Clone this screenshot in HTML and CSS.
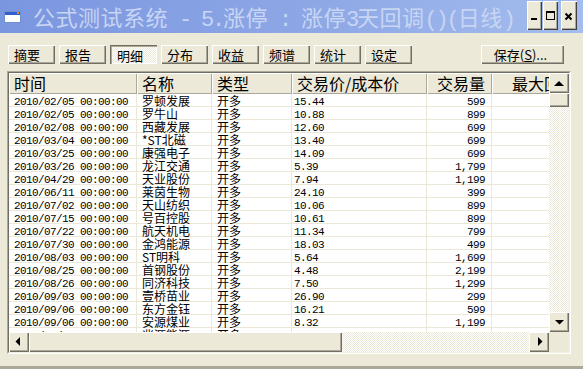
FILE: index.html
```html
<!DOCTYPE html>
<html lang="zh-CN">
<head>
<meta charset="utf-8">
<title>公式测试系统</title>
<link rel="stylesheet" href="styles.css">
</head>
<body>
<div class="window">
  <div class="titlebar">
    <svg class="appicon" viewBox="0 0 17 12" width="17" height="12">
      <rect x="0.5" y="0.5" width="16" height="11" fill="#ffffff" stroke="#6f8fcf"/>
      <rect x="1" y="1" width="15" height="3" fill="#2f5fd0"/>
      <rect x="13" y="1" width="2" height="2" fill="#f08040"/>
    </svg>
    <div class="title">公式测试系统<span class="hw"> - 5.</span>涨停<span class="hw"> : </span>涨停<span class="hw">3</span>天回调<span class="hw">()(</span>日线<span class="hw">)</span></div>
    <div class="caps">
      <span class="cap"><svg viewBox="0 0 15 29" width="15" height="29"><rect x="4" y="17" width="6" height="2" fill="#000"/></svg></span>
      <span class="cap"><svg viewBox="0 0 15 29" width="15" height="29"><rect x="3.5" y="10.5" width="8" height="8" fill="none" stroke="#000"/><rect x="3" y="10" width="9" height="2" fill="#000"/></svg></span>
      <span class="cap close"><svg viewBox="0 0 16 29" width="16" height="29"><path d="M4.5 12.5 L10.5 18.5 M10.5 12.5 L4.5 18.5" stroke="#000" stroke-width="2" fill="none"/></svg></span>
    </div>
  </div>

  <div class="toolbar">
    <button class="btn">摘要</button>
    <button class="btn">报告</button>
    <button class="btn on">明细</button>
    <button class="btn">分布</button>
    <button class="btn">收益</button>
    <button class="btn">频谱</button>
    <button class="btn">统计</button>
    <button class="btn">设定</button>
    <button class="btn save">保存(<u>S</u>)...</button>
  </div>

  <div class="listbox">
    <div class="listinner">
      <div class="view">
        <div class="hdr">
          <div class="h c1">时间</div>
          <div class="h c2">名称</div>
          <div class="h c3">类型</div>
          <div class="h c4">交易价/成本价</div>
          <div class="h c5 r">交易量</div>
          <div class="h c6 r">最大回撤</div>
        </div>
        <div class="row"><div class="c c1">2010/02/05 00:00:00</div><div class="c c2 z">罗顿发展</div><div class="c c3 z">开多</div><div class="c c4">15.44</div><div class="c c5 r">599</div><div class="c c6"></div></div>
        <div class="row"><div class="c c1">2010/02/05 00:00:00</div><div class="c c2 z">罗牛山</div><div class="c c3 z">开多</div><div class="c c4">10.88</div><div class="c c5 r">899</div><div class="c c6"></div></div>
        <div class="row"><div class="c c1">2010/02/08 00:00:00</div><div class="c c2 z">西藏发展</div><div class="c c3 z">开多</div><div class="c c4">12.60</div><div class="c c5 r">699</div><div class="c c6"></div></div>
        <div class="row"><div class="c c1">2010/03/04 00:00:00</div><div class="c c2 z">*ST北磁</div><div class="c c3 z">开多</div><div class="c c4">13.40</div><div class="c c5 r">699</div><div class="c c6"></div></div>
        <div class="row"><div class="c c1">2010/03/25 00:00:00</div><div class="c c2 z">康强电子</div><div class="c c3 z">开多</div><div class="c c4">14.09</div><div class="c c5 r">699</div><div class="c c6"></div></div>
        <div class="row"><div class="c c1">2010/03/26 00:00:00</div><div class="c c2 z">龙江交通</div><div class="c c3 z">开多</div><div class="c c4">5.39</div><div class="c c5 r">1,799</div><div class="c c6"></div></div>
        <div class="row"><div class="c c1">2010/04/29 00:00:00</div><div class="c c2 z">天业股份</div><div class="c c3 z">开多</div><div class="c c4">7.94</div><div class="c c5 r">1,199</div><div class="c c6"></div></div>
        <div class="row"><div class="c c1">2010/06/11 00:00:00</div><div class="c c2 z">莱茵生物</div><div class="c c3 z">开多</div><div class="c c4">24.10</div><div class="c c5 r">399</div><div class="c c6"></div></div>
        <div class="row"><div class="c c1">2010/07/02 00:00:00</div><div class="c c2 z">天山纺织</div><div class="c c3 z">开多</div><div class="c c4">10.06</div><div class="c c5 r">899</div><div class="c c6"></div></div>
        <div class="row"><div class="c c1">2010/07/15 00:00:00</div><div class="c c2 z">号百控股</div><div class="c c3 z">开多</div><div class="c c4">10.61</div><div class="c c5 r">899</div><div class="c c6"></div></div>
        <div class="row"><div class="c c1">2010/07/22 00:00:00</div><div class="c c2 z">航天机电</div><div class="c c3 z">开多</div><div class="c c4">11.34</div><div class="c c5 r">799</div><div class="c c6"></div></div>
        <div class="row"><div class="c c1">2010/07/30 00:00:00</div><div class="c c2 z">金鸿能源</div><div class="c c3 z">开多</div><div class="c c4">18.03</div><div class="c c5 r">499</div><div class="c c6"></div></div>
        <div class="row"><div class="c c1">2010/08/03 00:00:00</div><div class="c c2 z">ST明科</div><div class="c c3 z">开多</div><div class="c c4">5.64</div><div class="c c5 r">1,699</div><div class="c c6"></div></div>
        <div class="row"><div class="c c1">2010/08/25 00:00:00</div><div class="c c2 z">首钢股份</div><div class="c c3 z">开多</div><div class="c c4">4.48</div><div class="c c5 r">2,199</div><div class="c c6"></div></div>
        <div class="row"><div class="c c1">2010/08/26 00:00:00</div><div class="c c2 z">同济科技</div><div class="c c3 z">开多</div><div class="c c4">7.50</div><div class="c c5 r">1,299</div><div class="c c6"></div></div>
        <div class="row"><div class="c c1">2010/09/03 00:00:00</div><div class="c c2 z">壹桥苗业</div><div class="c c3 z">开多</div><div class="c c4">26.90</div><div class="c c5 r">299</div><div class="c c6"></div></div>
        <div class="row"><div class="c c1">2010/09/06 00:00:00</div><div class="c c2 z">东方金钰</div><div class="c c3 z">开多</div><div class="c c4">16.21</div><div class="c c5 r">599</div><div class="c c6"></div></div>
        <div class="row"><div class="c c1">2010/09/06 00:00:00</div><div class="c c2 z">安源煤业</div><div class="c c3 z">开多</div><div class="c c4">8.32</div><div class="c c5 r">1,199</div><div class="c c6"></div></div>
        <div class="row"><div class="c c1">2010/09/07 00:00:00</div><div class="c c2 z">兆源能源</div><div class="c c3 z">开多</div><div class="c c4">9.12</div><div class="c c5 r">1,099</div><div class="c c6"></div></div>
      </div>
      <div class="vbar">
        <div class="sbtn"><svg viewBox="0 0 20 20" width="20" height="20"><polygon points="5,13 15,13 10,8" fill="#000"/></svg></div>
        <div class="thumb vthumb"></div>
        <div class="track"></div>
        <div class="sbtn"><svg viewBox="0 0 20 20" width="20" height="20"><polygon points="6,8 15,8 10.5,12.5" fill="#000"/></svg></div>
      </div>
      <div class="hbar">
        <div class="sbtn"><svg viewBox="0 0 20 20" width="20" height="20"><polygon points="11,5 11,14 6.5,9.5" fill="#000"/></svg></div>
        <div class="thumb hthumb"></div>
        <div class="track"></div>
        <div class="sbtn"><svg viewBox="0 0 20 20" width="20" height="20"><polygon points="9,5 9,14 13.5,9.5" fill="#000"/></svg></div>
      </div>
      <div class="corner"></div>
    </div>
  </div>
</div>
</body>
</html>
```

FILE: styles.css
```css
html, body {
  margin: 0;
  padding: 0;
}
body {
  width: 583px;
  height: 369px;
  overflow: hidden;
  background: #ece9d8;
  font-family: "Noto Sans CJK SC", sans-serif;
}
.window {
  width: 583px;
  height: 369px;
  box-sizing: border-box;
  display: flex;
  flex-direction: column;
  background: #ece9d8;
  border-bottom: 3px solid #aca899;
}

/* title bar */
.titlebar {
  height: 33px;
  flex: none;
  display: flex;
  align-items: center;
  background: linear-gradient(90deg, #7a96df 0%, #8ea8e6 55%, #a4bdee 100%);
}
.appicon {
  flex: none;
  margin: 0 12px 0 4px;
}
.title {
  flex: none;
  color: #c8d5f3;
  font-size: 22px;
  line-height: 33px;
  height: 33px;
  white-space: pre;
  letter-spacing: 0.5px;
  font-family: "Noto Sans CJK SC", sans-serif;
}
.title .hw {
  font-family: "Liberation Mono", monospace;
  letter-spacing: -2.2px;
}
.caps {
  margin-left: auto;
  margin-right: 6px;
  align-self: flex-start;
  margin-top: 1px;
  display: flex;
  flex: none;
}
.cap {
  width: 15px;
  height: 29px;
  background: #ece9d8;
  box-shadow: inset 1px 1px #ffffff, inset -1px -1px #404040, inset -2px -2px #aca899;
  display: block;
}
.cap svg { display: block; }
.cap + .cap { margin-left: 1px; }
.cap.close { margin-left: 3px; width: 16px; }

/* toolbar */
.toolbar {
  flex: none;
  margin-top: 12px;
  height: 19px;
  padding: 0 19px 0 8px;
  display: flex;
  gap: 4px;
}
.btn {
  width: 47px;
  height: 19px;
  box-sizing: border-box;
  border: 0;
  margin: 0;
  padding: 0 0 0 6px;
  text-align: left;
  background: #ece9d8;
  color: #000;
  font: 13px/19px "Noto Sans CJK SC", sans-serif;
  box-shadow: inset 1px 1px #ffffff, inset -1px -1px #716f64, inset -2px -2px #aca899;
}
.btn.on {
  padding: 1px 0 0 7px;
  background: repeating-conic-gradient(#ffffff 0 25%, #ece9d8 0 50%) 0 0 / 2px 2px;
  box-shadow: inset 1px 1px #716f64, inset 2px 2px #aca899, inset -1px -1px #ffffff;
}
.btn.save {
  margin-left: auto;
  width: 83px;
  padding: 0 4px 0 0;
  text-align: center;
}
.btn.save u { text-decoration: underline; }

/* list */
.listbox {
  flex: none;
  margin: 7px 12px 0 7px;
  height: 283px;
  box-sizing: border-box;
  border: 1px solid;
  border-color: #aca899 #ffffff #ffffff #aca899;
}
.listinner {
  height: 100%;
  box-sizing: border-box;
  border: 1px solid;
  border-color: #716f64 #f1efe2 #f1efe2 #716f64;
  display: grid;
  grid-template-columns: 1fr 20px;
  grid-template-rows: 1fr 20px;
}
.view {
  background: #ffffff;
  overflow: hidden;
  min-width: 0;
  min-height: 0;
}
.hdr, .row {
  display: flex;
  width: 574px;
}
.hdr { height: 21px; }
.c1 { width: 128px; }
.c2 { width: 75px; }
.c3 { width: 80px; }
.c4 { width: 135px; }
.c5 { width: 65px; }
.c6 { width: 91px; }
.h, .c {
  flex: none;
  box-sizing: border-box;
  white-space: nowrap;
}
.h {
  height: 21px;
  padding: 0 0 0 5px;
  background: #ece9d8;
  color: #000;
  font: 16px/21px "Noto Sans CJK SC", sans-serif;
  box-shadow: inset 1px 1px #ffffff, inset -1px -1px #aca899;
}
.h.r { text-align: right; padding: 0 7px 0 0; }
.row { height: 13px; }
.c {
  height: 13px;
  padding: 2px 0 0 5px;
  border-right: 1px solid #ebe8d8;
  border-bottom: 1px solid #ebe8d8;
  font: 11px/13px "Liberation Mono", monospace;
  letter-spacing: -0.6px;
  color: #000;
}
.c.c4 { padding-left: 2px; }
.c.z {
  font: 12px/13px "Noto Sans CJK SC", sans-serif;
  letter-spacing: 0;
  padding-top: 0;
}
.c.r { text-align: right; padding-left: 0; padding-right: 6px; }

/* scrollbars */
.vbar, .hbar {
  display: flex;
  min-height: 0;
  min-width: 0;
}
.vbar { flex-direction: column; }
.sbtn, .thumb {
  flex: none;
  width: 20px;
  height: 20px;
  background: #ece9d8;
  box-sizing: border-box;
  box-shadow: inset 1px 1px #ffffff, inset -1px -1px #716f64, inset -2px -2px #aca899;
}
.sbtn svg { display: block; }
.vthumb { height: 14px; }
.hthumb { width: 313px; }
.track {
  flex: 1;
  background: repeating-conic-gradient(#ffffff 0 25%, #ece9d8 0 50%) 0 0 / 2px 2px;
}
.corner { background: #ece9d8; }
```
